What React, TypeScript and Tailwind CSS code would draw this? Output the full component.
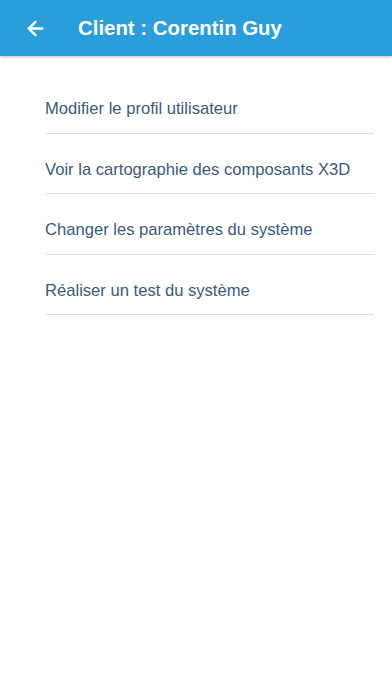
import { ArrowLeft } from 'lucide-react'

const items = [
  'Modifier le profil utilisateur',
  'Voir la cartographie des composants X3D',
  'Changer les paramètres du système',
  'Réaliser un test du système',
]

export default function App() {
  return (
    <div className="min-h-[696px] w-full bg-white" style={{ fontFamily: '"Liberation Sans", Arial, sans-serif' }}>
      {/* Header */}
      <div className="flex h-[56px] items-center bg-[#2a9edb] shadow-[0_1px_3px_rgba(0,0,0,0.25)]">
        <button className="ml-[23px] flex h-6 w-6 items-center justify-center text-white">
          <ArrowLeft className="h-[23px] w-[23px]" strokeWidth={2.5} />
        </button>
        <h1 className="ml-[31px] text-[20.4px] font-bold text-white">Client : Corentin Guy</h1>
      </div>

      {/* Menu */}
      <ul className="mt-[17px] pl-[45px] pr-[18px]">
        {items.map((item) => (
          <li
            key={item}
            className="border-b border-[#dcdcdc] pt-[26px] pb-[13.5px] text-[16.6px] leading-[20px] text-[#3b5a7d]"
          >
            {item}
          </li>
        ))}
      </ul>
    </div>
  )
}
